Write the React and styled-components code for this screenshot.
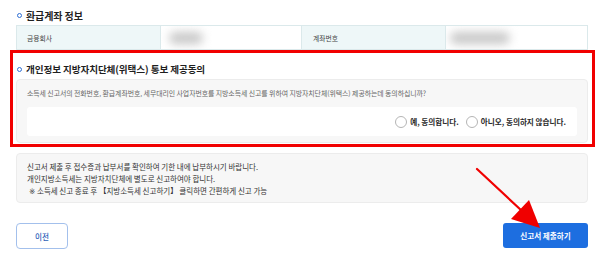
import React from 'react';
import styled, { createGlobalStyle } from 'styled-components';

const GlobalStyle = createGlobalStyle`
  html, body {
    margin: 0;
    padding: 0;
    background: #ffffff;
  }
  body {
    font-family: "Noto Sans CJK KR", "Noto Sans", sans-serif;
    color: #222;
  }
`;

const Page = styled.div`
  position: relative;
  width: 600px;
  height: 262px;
  box-sizing: border-box;
  padding: 8px 12px 0 16px;
  display: flex;
  flex-direction: column;
`;

const SectionTitle = styled.h2`
  display: flex;
  align-items: center;
  gap: 4px;
  margin: 0;
  height: 14px;
  font-size: ${p => p.$size || 9.6}px;
  font-weight: 700;
  color: #1f1f1f;
  letter-spacing: -0.1px;
  padding-left: 1px;
`;

const Bullet = styled.span`
  width: 3px;
  height: 3px;
  border-radius: 50%;
  border: 1.5px solid #2f6fd4;
  flex: none;
`;

const AccountTable = styled.div`
  display: grid;
  grid-template-columns: 143px 141px 144px 1fr;
  height: 23px;
  margin-top: 3px;
  border: 1px solid #dbe9eb;
`;

const LabelCell = styled.div`
  display: flex;
  align-items: center;
  padding-left: ${p => p.$pad || 10}px;
  background: #eef7f8;
  font-size: 6.8px;
  color: #444;
  border-left: ${p => (p.$first ? 'none' : '1px solid #dbe9eb')};
`;

const ValueCell = styled.div`
  display: flex;
  align-items: center;
  background: #fff;
  border-left: 1px solid #dbe9eb;
  overflow: hidden;
`;

const Blurred = styled.div`
  width: ${p => p.$w}px;
  height: 12px;
  margin-left: ${p => p.$offset}px;
  border-radius: 8px;
  background: #c8c8c8;
  filter: blur(5px);
`;

const ConsentSection = styled.section`
  position: relative;
  margin-top: 12px;
`;

const RedFrame = styled.div`
  position: absolute;
  left: -6px;
  right: -7px;
  top: -12px;
  bottom: -4px;
  border: 3.5px solid #f10000;
  pointer-events: none;
`;

const ConsentBox = styled.div`
  margin-top: 3px;
  height: 64px;
  box-sizing: border-box;
  background: #f7f7f7;
  border: 1px solid #ececec;
  border-radius: 4px;
  padding: 7px 10px 6px;
  display: flex;
  flex-direction: column;
`;

const Question = styled.p`
  margin: 0;
  height: 12px;
  line-height: 12px;
  font-size: 6.9px;
  color: #666;
  letter-spacing: -0.05px;
  white-space: nowrap;
`;

const ChoiceBar = styled.div`
  margin-top: auto;
  height: 29px;
  background: #fff;
  border-radius: 3px;
  display: flex;
  align-items: center;
  justify-content: flex-end;
  gap: 7px;
  padding-right: 11px;
`;

const Choice = styled.label`
  display: flex;
  align-items: center;
  gap: 3px;
  font-size: 7.6px;
  font-weight: 700;
  color: #2a2a2a;
`;

const Radio = styled.span`
  width: 10px;
  height: 10px;
  border-radius: 50%;
  border: 1px solid #b5b5b5;
  background: #fff;
  flex: none;
`;

const NoteBox = styled.div`
  margin-top: 10px;
  height: 50px;
  box-sizing: border-box;
  background: #f7f7f7;
  border: 1px solid #ececec;
  border-radius: 4px;
  padding: 7px 10px;
  display: flex;
  flex-direction: column;
`;

const NoteLine = styled.p`
  margin: 0;
  height: 12px;
  line-height: 12px;
  font-size: 7.5px;
  color: #333;
  white-space: nowrap;
  padding-left: ${p => p.$indent || 0}px;
`;

const RefMark = styled.span`
  font-family: "DejaVu Sans", "Noto Sans CJK KR", sans-serif;
  font-variant-emoji: text;
  color: #333;
`;

const ButtonRow = styled.div`
  margin-top: 20px;
  display: flex;
  justify-content: space-between;
  align-items: flex-start;
`;

const PrevButton = styled.button`
  width: 52px;
  height: 26px;
  border: 1px solid #a3c0ec;
  border-radius: 4px;
  background: #fff;
  color: #2c5fb8;
  font-family: inherit;
  font-size: 7.6px;
  font-weight: 500;
  padding: 0;
`;

const SubmitButton = styled.button`
  width: 85px;
  height: 25px;
  border: none;
  border-radius: 3px;
  background: #1d6ee0;
  color: #fff;
  font-family: inherit;
  font-size: 7.6px;
  font-weight: 700;
  padding: 0;
`;

const Arrow = styled.svg`
  position: absolute;
  left: 0;
  top: 0;
  pointer-events: none;
`;

export default function App() {
  return (
    <>
      <GlobalStyle />
      <Page>
        <SectionTitle $size={10}>
          <Bullet />
          환급계좌 정보
        </SectionTitle>
        <AccountTable>
          <LabelCell $first>금융회사</LabelCell>
          <ValueCell>
            <Blurred $w={34} $offset={8} />
          </ValueCell>
          <LabelCell $pad={11}>계좌번호</LabelCell>
          <ValueCell>
            <Blurred $w={60} $offset={4} />
          </ValueCell>
        </AccountTable>

        <ConsentSection>
          <RedFrame />
          <SectionTitle>
            <Bullet />
            개인정보 지방자치단체(위택스) 통보 제공동의
          </SectionTitle>
          <ConsentBox>
            <Question>
              소득세 신고서의 전화번호, 환급계좌번호, 세무대리인 사업자번호를 지방소득세 신고를 위하여 지방자치단체(위택스) 제공하는데 동의하십니까?
            </Question>
            <ChoiceBar>
              <Choice>
                <Radio />
                예, 동의합니다.
              </Choice>
              <Choice>
                <Radio />
                아니오, 동의하지 않습니다.
              </Choice>
            </ChoiceBar>
          </ConsentBox>
        </ConsentSection>

        <NoteBox>
          <NoteLine>신고서 제출 후 접수증과 납부서를 확인하여 기한 내에 납부하시기 바랍니다.</NoteLine>
          <NoteLine>개인지방소득세는 지방자치단체에 별도로 신고하여야 합니다.</NoteLine>
          <NoteLine $indent={2}>
            <RefMark>{'\u203B\uFE0E'}</RefMark> 소득세 신고 종료 후 【지방소득세 신고하기】 클릭하면 간편하게 신고 가능
          </NoteLine>
        </NoteBox>

        <ButtonRow>
          <PrevButton>이전</PrevButton>
          <SubmitButton>신고서 제출하기</SubmitButton>
        </ButtonRow>

        <Arrow width="600" height="262" viewBox="0 0 600 262">
          <line x1="477" y1="169" x2="522" y2="211" stroke="#f00000" strokeWidth="2.2" strokeLinecap="round" />
          <polygon points="529,200 540,228 511,219" fill="#f00000" />
        </Arrow>
      </Page>
    </>
  );
}
